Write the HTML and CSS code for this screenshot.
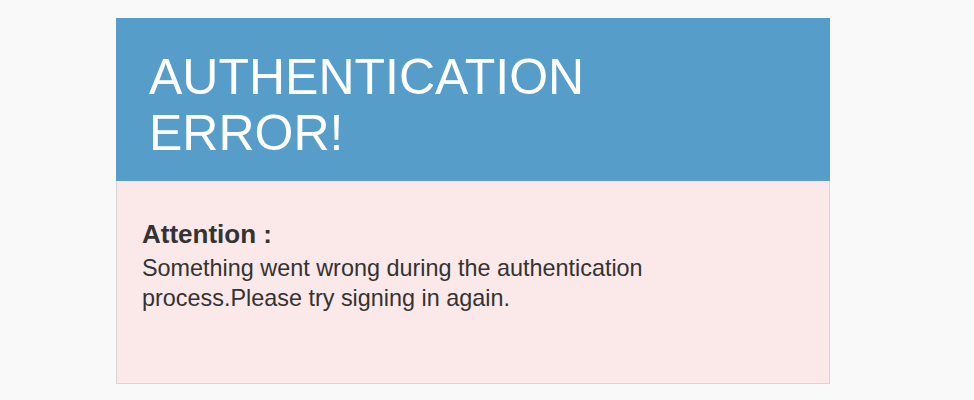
FILE: index.html
```html
<!DOCTYPE html>
<html>
<head>
<meta charset="utf-8">
<link rel="stylesheet" href="styles.css">
</head>
<body>
<div class="card">
  <div class="card-header">
    <h1 class="title">AUTHENTICATION ERROR!</h1>
  </div>
  <div class="card-body">
    <div class="label">Attention :</div>
    <p class="message">Something went wrong during the authentication process.Please try signing in again.</p>
  </div>
</div>
</body>
</html>
```
FILE: styles.css
```css
html, body {
  margin: 0;
  padding: 0;
  background: #f9f9f9;
  font-family: "Liberation Sans", Arial, sans-serif;
}
body {
  padding: 18px 0 0 116px;
}
.card {
  width: 714px;
  box-sizing: border-box;
}
.card-header {
  background: #569dca;
  padding: 31px 33px 20px 33px;
  height: 163px;
  box-sizing: border-box;
}
.title {
  margin: 0;
  font-weight: normal;
  color: #ffffff;
  font-size: 50px;
  line-height: 56px;
  max-width: 460px;
}
.card-body {
  background: #fbe8e8;
  border: 1px solid #d6d6d6;
  border-top: none;
  padding: 38px 25px 0 25px;
  height: 203px;
  box-sizing: border-box;
  color: #333333;
}
.label {
  font-weight: bold;
  font-size: 26px;
  line-height: 30px;
}
.message {
  margin: 4px 0 0 0;
  font-size: 23.4px;
  line-height: 30px;
  max-width: 540px;
}
```
